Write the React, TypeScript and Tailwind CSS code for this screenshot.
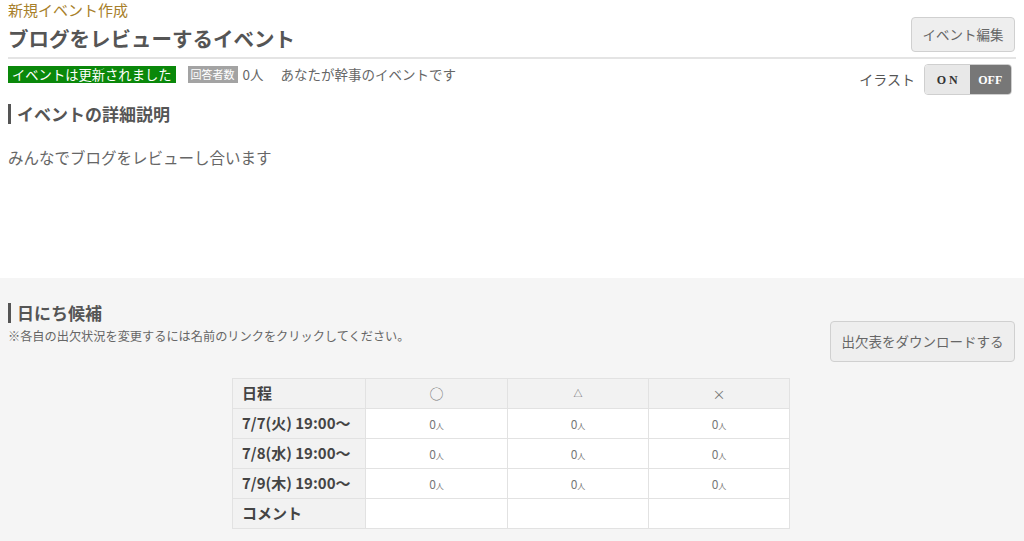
import React from "react";

const jp = { fontFamily: '"Noto Sans CJK JP", "Noto Sans", sans-serif' };

function Zero() {
  return (
    <span className="text-[#777]">
      <span className="text-[12px]">0</span>
      <span className="text-[8px]">人</span>
    </span>
  );
}

export default function App() {
  const rows = ["7/7(火) 19:00～", "7/8(水) 19:00～", "7/9(木) 19:00～"];
  return (
    <div style={jp} className="w-[1024px] h-[541px] overflow-hidden bg-white text-[#666]">
      {/* top section */}
      <div className="h-[278px] bg-white px-2">
        <div className="flex justify-between">
          <div>
            <div className="text-[15px] leading-[19px] text-[#a8802a]">新規イベント作成</div>
            <div className="mt-[6px] text-[20.5px] leading-[26px] font-bold text-[#555] whitespace-nowrap">
              ブログをレビューするイベント
            </div>
          </div>
          <button className="mt-[17px] mr-[1px] h-[35px] w-[104px] rounded-[4px] border border-[#d0d0d0] bg-[#eeeeee] text-[13.5px] text-[#666]">
            イベント編集
          </button>
        </div>
        <div className="mt-[5px] h-[2px] bg-[#e4e4e4]" />
        <div className="flex justify-between items-start">
          <div className="mt-[5px] flex items-center whitespace-nowrap">
            <span className="bg-[#0a880a] text-white text-[13.3px] leading-[17px] px-[4px]">
              イベントは更新されました
            </span>
            <span className="ml-[12px] bg-[#a3a3a3] text-white text-[11px] leading-[17px] px-[3px]">
              回答者数
            </span>
            <span className="ml-[5px] text-[13.5px]">0人</span>
            <span className="ml-[17px] text-[13.5px]">あなたが幹事のイベントです</span>
          </div>
          <div className="mt-[5px] flex items-center mr-[4px]">
            <span className="text-[14px] text-[#555] mr-[9px]">イラスト</span>
            <div
              className="flex h-[31px] w-[88px] rounded-[4px] overflow-hidden border border-[#cfcfcf] text-[12px] font-bold"
              style={{ fontFamily: '"Liberation Serif", serif' }}
            >
              <span className="flex-1 flex items-center justify-center bg-[#e8e8e8] text-[#333] tracking-[3px] pl-[3px]">
                ON
              </span>
              <span className="flex-1 flex items-center justify-center bg-[#777777] text-white">
                OFF
              </span>
            </div>
          </div>
        </div>
        <div className="mt-[6px] flex items-center">
          <span className="w-[3px] h-[20px] bg-[#555]" />
          <span className="ml-[6px] text-[17px] font-bold text-[#555]">イベントの詳細説明</span>
        </div>
        <div className="mt-[19px] text-[15.5px] text-[#666]">みんなでブログをレビューし合います</div>
      </div>

      {/* bottom section */}
      <div className="h-[263px] bg-[#f5f5f5] px-2">
        <div className="flex justify-between">
          <div>
            <div className="mt-[22px] flex items-center">
              <span className="w-[3px] h-[20px] bg-[#555]" />
              <span className="ml-[6px] text-[17px] font-bold text-[#555]">日にち候補</span>
            </div>
            <div className="mt-[1px] text-[12.2px] text-[#666]">
              ※各自の出欠状況を変更するには名前のリンクをクリックしてください。
            </div>
          </div>
          <button className="mt-[43px] mr-[1px] h-[41px] w-[185px] rounded-[4px] border border-[#d0d0d0] bg-[#eeeeee] text-[13.5px] text-[#666]">
            出欠表をダウンロードする
          </button>
        </div>
        <div className="mt-[16px] flex">
          <table className="ml-[224px] border-collapse text-[15px]">
            <tbody>
              <tr className="h-[30px] bg-[#f2f2f2]">
                <td className="w-[133px] border border-[#e2e2e2] pl-[9px] font-bold text-[#444]">日程</td>
                <td className="w-[142px] border border-[#e2e2e2] text-center text-[#777] text-[14px]">○</td>
                <td className="w-[141px] border border-[#e2e2e2] text-center text-[#555] text-[9px]">△</td>
                <td className="w-[141px] border border-[#e2e2e2] text-center text-[#777] text-[13px]">×</td>
              </tr>
              {rows.map((r) => (
                <tr key={r} className="h-[30px]">
                  <td className="border border-[#e2e2e2] bg-[#f2f2f2] pl-[9px] font-bold text-[#444] whitespace-nowrap">{r}</td>
                  <td className="border border-[#e2e2e2] bg-white text-center"><Zero /></td>
                  <td className="border border-[#e2e2e2] bg-white text-center"><Zero /></td>
                  <td className="border border-[#e2e2e2] bg-white text-center"><Zero /></td>
                </tr>
              ))}
              <tr className="h-[30px]">
                <td className="border border-[#e2e2e2] bg-[#f2f2f2] pl-[9px] font-bold text-[#444]">コメント</td>
                <td className="border border-[#e2e2e2] bg-white" />
                <td className="border border-[#e2e2e2] bg-white" />
                <td className="border border-[#e2e2e2] bg-white" />
              </tr>
            </tbody>
          </table>
        </div>
      </div>
    </div>
  );
}
